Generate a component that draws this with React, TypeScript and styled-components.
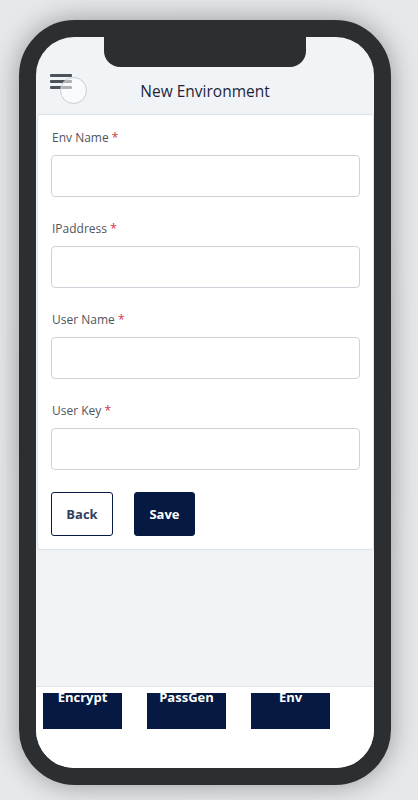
import React from "react";
import styled, { createGlobalStyle } from "styled-components";

const GlobalStyle = createGlobalStyle`
  html, body {
    margin: 0;
    padding: 0;
    background: #e6e8eb;
  }
  body {
    font-family: "Open Sans", "Noto Sans", sans-serif;
  }
  * {
    box-sizing: border-box;
  }
`;

const Page = styled.div`
  width: 418px;
  height: 800px;
  padding: 20px 0 0 19px;
  background: radial-gradient(ellipse at center, #c9ccd0 0%, #e6e8eb 70%);
`;

const Phone = styled.div`
  position: relative;
  width: 372px;
  height: 765px;
  border: 17px solid #2b2f32;
  border-radius: 56px;
  background: #2b2f32;
  box-shadow: 0 0 28px rgba(0, 0, 0, 0.35);
`;

const Screen = styled.div`
  position: relative;
  width: 100%;
  height: 100%;
  border-radius: 38px;
  overflow: hidden;
  background: #f1f4f7;
  display: flex;
  flex-direction: column;
`;

const Notch = styled.div`
  position: absolute;
  top: 0;
  left: 68px;
  width: 202px;
  height: 30px;
  background: #2b2f32;
  border-radius: 0 0 16px 16px;
`;

const Header = styled.header`
  height: 77px;
  flex-shrink: 0;
  padding: 37px 14px 0;
  display: grid;
  grid-template-columns: 22px 1fr 22px;
  align-items: start;
`;

const MenuButton = styled.button`
  position: relative;
  width: 22px;
  height: 15px;
  padding: 0;
  border: 0;
  background: none;
  display: flex;
  flex-direction: column;
  justify-content: space-between;
  cursor: pointer;
`;

const Bar = styled.span`
  display: block;
  height: 3px;
  width: 100%;
  border-radius: 1px;
  background: #4b5259;
`;

const Ripple = styled.span`
  position: absolute;
  left: 10px;
  top: 3px;
  width: 27px;
  height: 27px;
  border-radius: 50%;
  border: 1px solid #c9cccf;
  background: rgba(255, 255, 255, 0.55);
`;

const Title = styled.h1`
  margin: 6px 0 0;
  text-align: center;
  font-size: 15.5px;
  line-height: 22px;
  font-weight: 400;
  color: #231f3a;
`;

const Card = styled.form`
  background: #fff;
  border: 1px solid #dde2e7;
  border-radius: 3px;
  margin: 0 0 0 1px;
  padding: 13px 13px 13px;
  display: flex;
  flex-direction: column;
`;

const Field = styled.div`
  display: flex;
  flex-direction: column;
  gap: 7px;
  margin-bottom: 22px;
`;

const Label = styled.label`
  font-size: 12px;
  line-height: 20px;
  color: #4f555b;
  padding-left: 1px;
`;

const Req = styled.span`
  color: #d6304a;
`;

const Input = styled.input`
  height: 42px;
  width: 100%;
  border: 1px solid #ced3d9;
  border-radius: 4px;
  background: #fff;
  font: inherit;
  padding: 0 12px;
`;

const Actions = styled.div`
  display: flex;
  gap: 21px;
`;

const Button = styled.button<{ $solid?: boolean }>`
  height: 44px;
  width: ${p => (p.$solid ? "61px" : "62px")};
  padding: 0;
  border-radius: 3px;
  border: 1px solid #051942;
  background: ${p => (p.$solid ? "#051942" : "#fff")};
  color: ${p => (p.$solid ? "#fff" : "#34405f")};
  font-family: "Open Sans", sans-serif;
  font-weight: 700;
  font-size: 13px;
  cursor: pointer;
`;

const Filler = styled.div`
  flex: 1;
`;

const BottomNav = styled.nav`
  height: 82px;
  flex-shrink: 0;
  background: #fff;
  border-top: 1px solid #e3e7eb;
  padding: 6px 0 0 7px;
`;

const NavTrack = styled.div`
  height: 36px;
  overflow: hidden;
  display: flex;
  gap: 25px;
`;

const NavButton = styled.button`
  width: 79px;
  height: 36px;
  border: 0;
  padding: 0;
  background: #051942;
  color: #fff;
  font-family: "Open Sans", sans-serif;
  font-weight: 700;
  font-size: 13px;
  line-height: 14px;
  display: flex;
  justify-content: center;
  align-items: flex-start;
  span {
    margin-top: -3px;
  }
`;

const fields = ["Env Name", "IPaddress", "User Name", "User Key"];

export default function App() {
  return (
    <>
      <GlobalStyle />
      <Page>
        <Phone>
          <Screen>
            <Header>
              <MenuButton aria-label="menu">
                <Bar />
                <Bar />
                <Bar />
                <Ripple />
              </MenuButton>
              <Title>New Environment</Title>
              <div />
            </Header>
            <Card>
              {fields.map(f => (
                <Field key={f}>
                  <Label>
                    {f} <Req>*</Req>
                  </Label>
                  <Input />
                </Field>
              ))}
              <Actions>
                <Button type="button">Back</Button>
                <Button type="button" $solid>
                  Save
                </Button>
              </Actions>
            </Card>
            <Filler />
            <BottomNav>
              <NavTrack>
                <NavButton>
                  <span>Encrypt</span>
                </NavButton>
                <NavButton>
                  <span>PassGen</span>
                </NavButton>
                <NavButton>
                  <span>Env</span>
                </NavButton>
              </NavTrack>
            </BottomNav>
            <Notch />
          </Screen>
        </Phone>
      </Page>
    </>
  );
}
